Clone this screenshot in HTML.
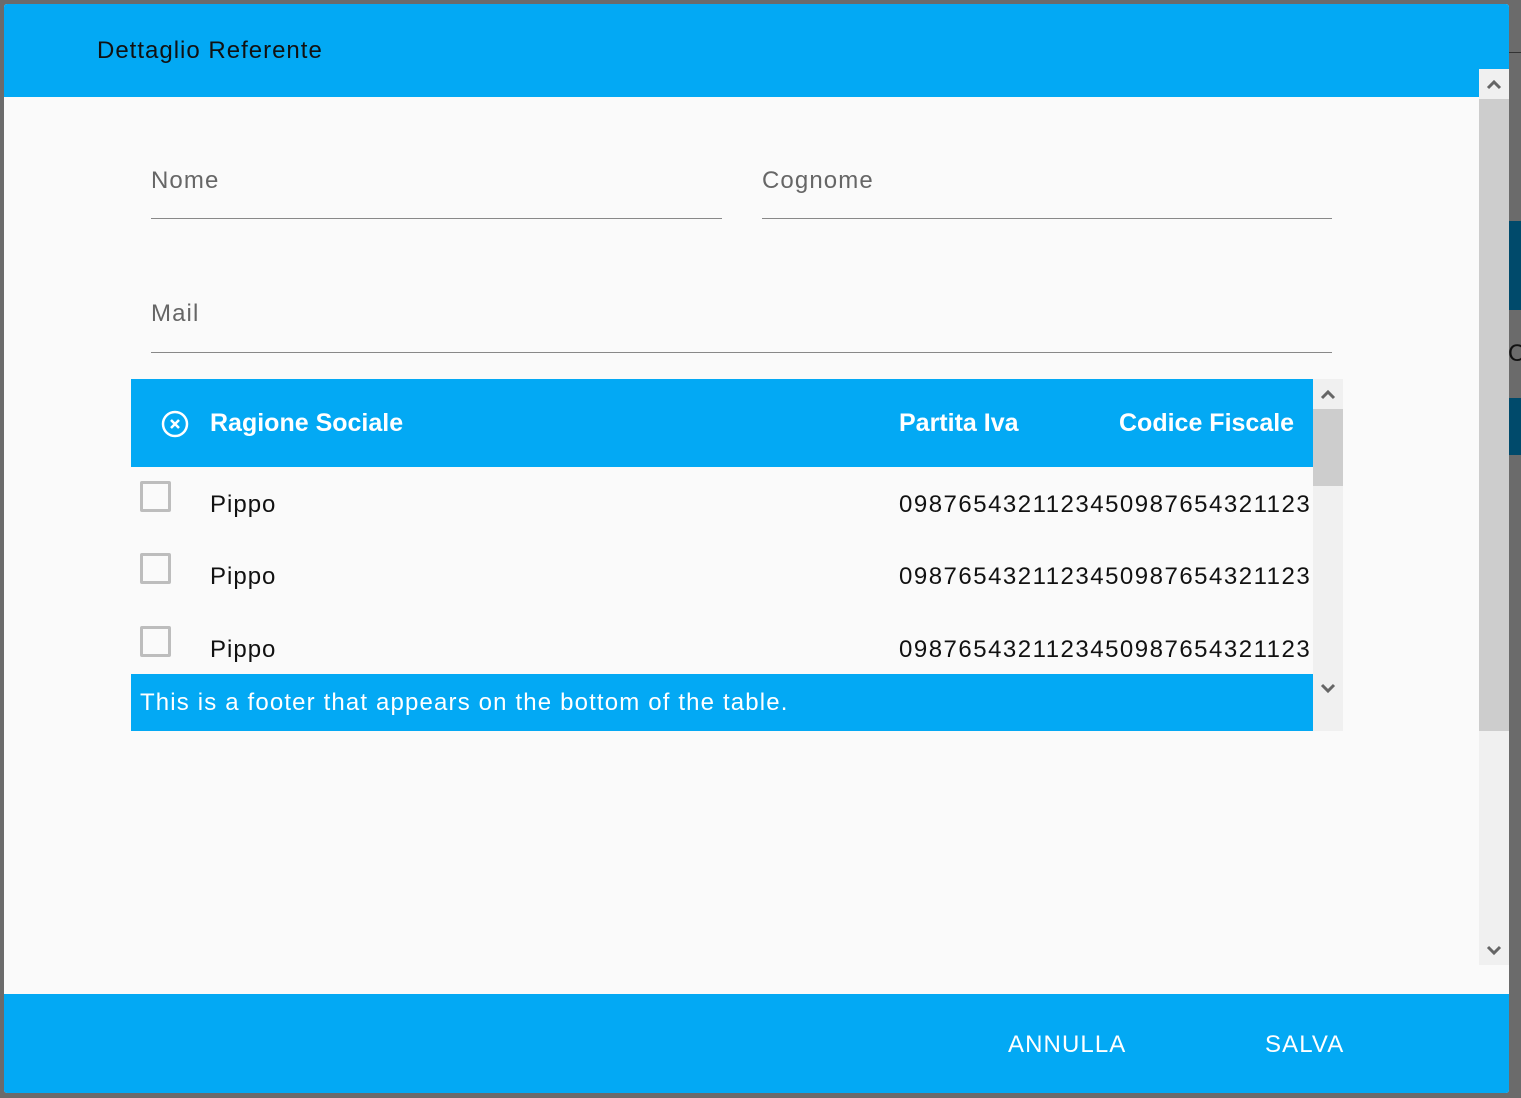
<!DOCTYPE html>
<html><head><style>
*{margin:0;padding:0;box-sizing:border-box}
body{width:1521px;height:1098px;background:#6b6b6b;position:relative;overflow:hidden;font-family:"Liberation Sans",sans-serif}
.a{position:absolute}
.lbl{font-size:24px;color:#666;letter-spacing:1.1px}
.line{height:1px;background:#888}
.cb{width:31px;height:31px;border:3px solid #bdbdbd;border-radius:2px;background:#fafafa}
.row{font-size:24px;color:#111;letter-spacing:1px}
</style></head><body>
<div class="a" style="left:1509px;top:52px;width:12px;height:1px;background:#333"></div>
<div class="a" style="left:1509px;top:221px;width:12px;height:89px;background:#004a6b"></div>
<div class="a" style="left:1509px;top:398px;width:12px;height:57px;background:#004a6b"></div>
<div class="a" style="left:1508px;top:340px;font-size:24px;color:#111">C</div>
<div class="a" style="left:4px;top:4px;width:1505px;height:1089px;background:#fafafa;border-radius:3px;overflow:hidden">
 <div class="a" style="left:0;top:0;width:1505px;height:93px;background:#03a9f4"></div>
 <div class="a" style="left:93px;top:33px;font-size:24px;color:#111;letter-spacing:1px">Dettaglio Referente</div>
 <div class="a" style="left:0;top:990px;width:1505px;height:99px;background:#03a9f4"></div>
 <div class="a" style="left:1004px;top:1027px;font-size:24px;color:#fff;letter-spacing:1.1px">ANNULLA</div>
 <div class="a" style="left:1261px;top:1027px;font-size:24px;color:#fff;letter-spacing:1.1px">SALVA</div>
 <div class="a" style="left:1475px;top:65px;width:30px;height:896px;background:#f0f0f0"></div>
 <div class="a" style="left:1475px;top:95px;width:30px;height:632px;background:#cdcdcd"></div>
 <svg class="a" style="left:1475px;top:65px" width="30" height="30"><path d="M9 19l6-6 6 6" stroke="#666" stroke-width="3" fill="none"/></svg>
 <svg class="a" style="left:1475px;top:931px" width="30" height="30"><path d="M9 12l6 6 6-6" stroke="#666" stroke-width="3" fill="none"/></svg>
 <div class="a lbl" style="left:147px;top:163px">Nome</div>
 <div class="a line" style="left:147px;top:214px;width:571px"></div>
 <div class="a lbl" style="left:758px;top:163px">Cognome</div>
 <div class="a line" style="left:758px;top:214px;width:570px"></div>
 <div class="a lbl" style="left:147px;top:296px">Mail</div>
 <div class="a line" style="left:147px;top:348px;width:1181px"></div>
 <div class="a" style="left:127px;top:375px;width:1182px;height:88px;background:#03a9f4"></div>
 <svg class="a" style="left:156px;top:406px" width="30" height="30"><circle cx="15" cy="14" r="12" stroke="#fff" stroke-width="2.5" fill="none"/><path d="M11 10l8 8M19 10l-8 8" stroke="#fff" stroke-width="2.5"/></svg>
 <div class="a" style="left:206px;top:405px;font-size:25px;font-weight:bold;color:#fff">Ragione Sociale</div>
 <div class="a" style="left:895px;top:405px;font-size:25px;font-weight:bold;color:#fff">Partita Iva</div>
 <div class="a" style="left:1115px;top:405px;font-size:25px;font-weight:bold;color:#fff">Codice Fiscale</div>
 <div class="a cb" style="left:136px;top:477px"></div>
 <div class="a row" style="left:206px;top:487px">Pippo</div>
 <div class="a cb" style="left:136px;top:549px"></div>
 <div class="a row" style="left:206px;top:559px">Pippo</div>
 <div class="a cb" style="left:136px;top:622px"></div>
 <div class="a row" style="left:206px;top:632px">Pippo</div>
 <div class="a" style="left:895px;top:463px;width:414px;height:207px;overflow:hidden">
  <div class="a row" style="left:0;top:24px;white-space:nowrap;letter-spacing:1.5px">0987654321123450987654321123</div>
  <div class="a row" style="left:0;top:96px;white-space:nowrap;letter-spacing:1.5px">0987654321123450987654321123</div>
  <div class="a row" style="left:0;top:169px;white-space:nowrap;letter-spacing:1.5px">0987654321123450987654321123</div>
 </div>
 <div class="a" style="left:127px;top:670px;width:1182px;height:57px;background:#03a9f4"></div>
 <div class="a" style="left:136px;top:685px;font-size:24px;color:#fff;letter-spacing:1.15px">This is a footer that appears on the bottom of the table.</div>
 <div class="a" style="left:1309px;top:375px;width:30px;height:352px;background:#f0f0f0"></div>
 <div class="a" style="left:1309px;top:405px;width:30px;height:77px;background:#cdcdcd"></div>
 <svg class="a" style="left:1309px;top:375px" width="30" height="30"><path d="M9 19l6-6 6 6" stroke="#666" stroke-width="3" fill="none"/></svg>
 <svg class="a" style="left:1309px;top:669px" width="30" height="30"><path d="M9 12l6 6 6-6" stroke="#666" stroke-width="3" fill="none"/></svg>
</div>
</body></html>
